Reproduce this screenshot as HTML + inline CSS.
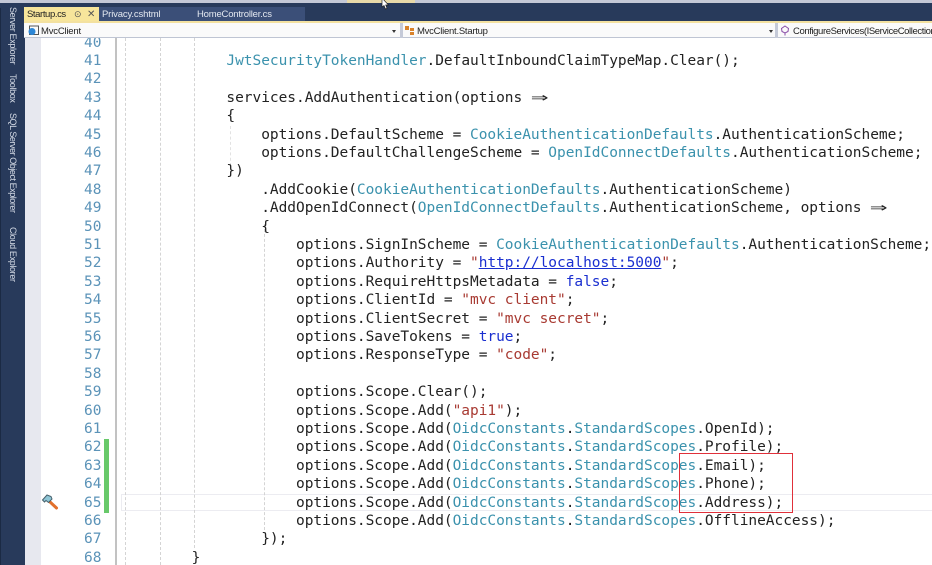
<!DOCTYPE html>
<html><head><meta charset="utf-8">
<style>
html,body{margin:0;padding:0;width:932px;height:565px;overflow:hidden;background:#fff}
*{box-sizing:border-box}
#a{position:absolute;left:0;top:0;width:932px;height:565px;overflow:hidden;filter:blur(.25px);font-family:"Liberation Sans",sans-serif}
.abs{position:absolute}
.code{position:absolute;left:122px;top:-4.5px;font:14.5px/18.41px "DejaVu Sans Mono","Liberation Mono",monospace;letter-spacing:-.03px;color:#222;white-space:pre}
.nums{position:absolute;left:80px;width:21.5px;top:-4.5px;font:14.5px/18.41px "DejaVu Sans Mono","Liberation Mono",monospace;color:#5b93b8;text-align:right;white-space:pre}
.t{color:#3b92ad}.s{color:#a83a32}.k{color:#1a2fd0}.u{color:#1a2fd0;text-decoration:underline}
.ar{display:inline-block;width:2ch;text-align:center;transform:scale(2,1.15)}
.g{position:absolute;width:0;border-left:1px dashed #d4d4d4}
.v{position:absolute;writing-mode:vertical-rl;font-size:9px;color:#d5dbe6;white-space:nowrap;left:7px;line-height:12px;letter-spacing:-.35px}
.tab{position:absolute;top:7px;height:14px;font-size:9.5px;line-height:15px;color:#e3e8f0;white-space:nowrap}
.nav{position:absolute;top:25px;font-size:9.5px;line-height:14px;color:#222;white-space:nowrap}
</style></head><body><div id="a">
<div class="abs" style="left:0;top:0;width:932px;height:8px;background:#c4c8d6"></div>
<div class="abs" style="left:347px;top:0;width:68px;height:3px;background:#e8d9a8"></div>
<div class="abs" style="left:0;top:3px;width:932px;height:35px;background:#283a5b"></div>
<div class="abs" style="left:0;top:8px;width:1px;height:557px;background:#1b2a44"></div>

<div class="abs" style="left:24px;top:7px;width:281px;height:15px;background:#3b4f78"></div>
<div class="abs" style="left:24px;top:7px;width:75px;height:15px;background:#f7e59b"></div>
<div class="tab" style="left:27px;color:#222;letter-spacing:-.4px">Startup.cs</div>
<div class="tab" style="left:74px;color:#555;font-size:9px">&#8857;</div>
<div class="tab" style="left:87px;color:#555;font-size:10px">&#10005;</div>
<div class="tab" style="left:102px;letter-spacing:-.15px">Privacy.cshtml</div>
<div class="tab" style="left:197px;letter-spacing:-.2px">HomeController.cs</div>

<div class="abs" style="left:24px;top:21px;width:908px;height:2px;background:#f3e1a0"></div>
<div class="abs" style="left:24px;top:23px;width:908px;height:15px;background:#fafafa"></div>
<div class="abs" style="left:24px;top:37px;width:908px;height:1.5px;background:#bfc5d3"></div>
<div class="abs" style="left:400px;top:23px;width:3px;height:15px;background:#c5cad8"></div>
<div class="abs" style="left:775px;top:23px;width:3px;height:15px;background:#c5cad8"></div>
<svg class="abs" style="left:28px;top:25px" width="11" height="11" viewBox="0 0 11 11"><rect x="1.5" y="1" width="9" height="8.5" fill="none" stroke="#555"/><circle cx="4" cy="6.5" r="3.5" fill="#2d87d6"/></svg>
<div class="nav" style="left:41px;letter-spacing:-.2px">MvcClient</div>
<div class="abs" style="left:392px;top:30px;border:2.5px solid transparent;border-top:3px solid #333;border-bottom:0"></div>
<svg class="abs" style="left:404px;top:25px" width="12" height="11" viewBox="0 0 12 11"><rect x="1" y="1" width="4" height="4" fill="#d9822b"/><rect x="6" y="3" width="4" height="3" fill="#d9822b"/><rect x="6" y="7" width="4" height="3" fill="#d9822b"/></svg>
<div class="nav" style="left:417px;letter-spacing:-.25px">MvcClient.Startup</div>
<div class="abs" style="left:769px;top:30px;border:2.5px solid transparent;border-top:3px solid #333;border-bottom:0"></div>
<svg class="abs" style="left:780px;top:25px" width="10" height="11" viewBox="0 0 10 11"><path d="M5 1 L8.5 3.5 L8 6.5 L5 8 L2 6.5 L1.5 3.5Z M5 8V10.5" fill="none" stroke="#8a4fa8"/></svg>
<div class="nav" style="left:793px;letter-spacing:-.4px">ConfigureServices(IServiceCollection</div>

<div class="abs" style="left:0;top:38px;width:932px;height:527px;overflow:hidden;background:#fff">
<div class="abs" style="left:0;top:0;width:25px;height:527px;background:#283a5b"></div>
<div class="abs" style="left:0;top:0;width:1px;height:527px;background:#1b2a44"></div>
<div class="abs" style="left:25px;top:0;width:16px;height:527px;background:#e7e8ef"></div>
<div class="abs" style="left:115px;top:0;width:1.5px;height:527px;background:#c2c2c2"></div>
<div class="abs" style="left:104px;top:401px;width:5px;height:74px;background:#68c96a"></div>
<div class="abs" style="left:121px;top:456px;width:811px;height:17px;border:1.5px solid #ececf1;border-right:0"></div>

<div class="g" style="left:125px;top:0;height:527px"></div>
<div class="g" style="left:160px;top:0;height:527px"></div>
<div class="g" style="left:194px;top:0;height:510px"></div>
<div class="g" style="left:230px;top:88px;height:40px;border-color:#e2e2e2"></div>
<div class="g" style="left:264px;top:186px;height:306px"></div>

<svg class="abs" style="left:41px;top:455px" width="18" height="18" viewBox="0 0 18 18"><path d="M8 8 L15.5 15" stroke="#e2702c" stroke-width="3" stroke-linecap="round"/><path d="M1.5 7 L6 2 L10 3.5 L11 6 L7.5 9.5 L5 7.5 L3.5 9Z" fill="#8fc6d6" stroke="#45606c" stroke-width="1"/></svg>

<div class="nums">40
41
42
43
44
45
46
47
48
49
50
51
52
53
54
55
56
57
58
59
60
61
62
63
64
65
66
67
68</div>
<div class="code">
            <span class="t">JwtSecurityTokenHandler</span>.DefaultInboundClaimTypeMap.Clear();

            services.AddAuthentication(options <span class="ar">&#8658;</span>
            {
                options.DefaultScheme = <span class="t">CookieAuthenticationDefaults</span>.AuthenticationScheme;
                options.DefaultChallengeScheme = <span class="t">OpenIdConnectDefaults</span>.AuthenticationScheme;
            })
                .AddCookie(<span class="t">CookieAuthenticationDefaults</span>.AuthenticationScheme)
                .AddOpenIdConnect(<span class="t">OpenIdConnectDefaults</span>.AuthenticationScheme, options <span class="ar">&#8658;</span>
                {
                    options.SignInScheme = <span class="t">CookieAuthenticationDefaults</span>.AuthenticationScheme;
                    options.Authority = <span class="s">"</span><span class="u">http://localhost:5000</span><span class="s">"</span>;
                    options.RequireHttpsMetadata = <span class="k">false</span>;
                    options.ClientId = <span class="s">"mvc client"</span>;
                    options.ClientSecret = <span class="s">"mvc secret"</span>;
                    options.SaveTokens = <span class="k">true</span>;
                    options.ResponseType = <span class="s">"code"</span>;

                    options.Scope.Clear();
                    options.Scope.Add(<span class="s">"api1"</span>);
                    options.Scope.Add(<span class="t">OidcConstants</span>.<span class="t">StandardScopes</span>.OpenId);
                    options.Scope.Add(<span class="t">OidcConstants</span>.<span class="t">StandardScopes</span>.Profile);
                    options.Scope.Add(<span class="t">OidcConstants</span>.<span class="t">StandardScopes</span>.Email);
                    options.Scope.Add(<span class="t">OidcConstants</span>.<span class="t">StandardScopes</span>.Phone);
                    options.Scope.Add(<span class="t">OidcConstants</span>.<span class="t">StandardScopes</span>.Address);
                    options.Scope.Add(<span class="t">OidcConstants</span>.<span class="t">StandardScopes</span>.OfflineAccess);
                });
        }</div>
<div class="abs" style="left:679px;top:415px;width:114px;height:60px;border:1px solid #e0303a"></div>
</div>

<div class="v" style="top:7px">Server Explorer</div>
<div class="v" style="top:74px">Toolbox</div>
<div class="v" style="top:113px;letter-spacing:-.45px">SQL Server Object Explorer</div>
<div class="v" style="top:227px">Cloud Explorer</div>
<svg class="abs" style="left:381px;top:0" width="10" height="10" viewBox="0 0 10 10"><path d="M1 -2 L1 7 L3 5.5 L4.5 9 L6 8.3 L4.7 5 L7.5 5Z" fill="#fff" stroke="#222" stroke-width=".7"/></svg>
</div></body></html>
